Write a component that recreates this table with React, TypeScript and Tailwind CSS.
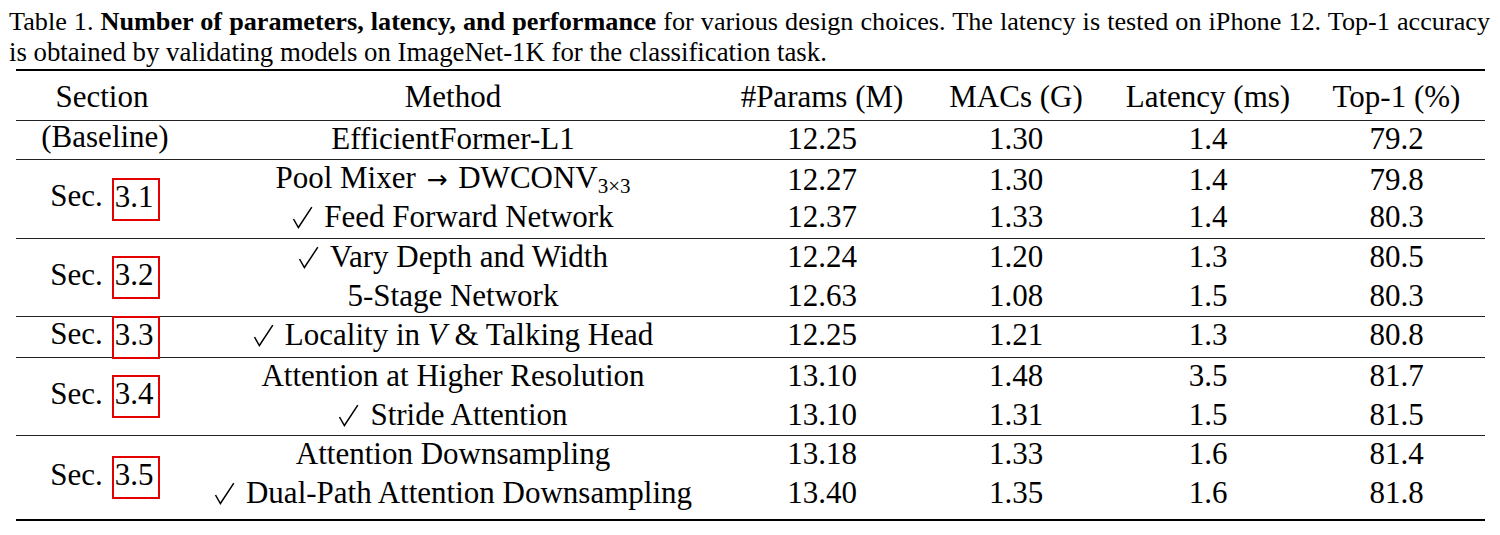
import React from "react"

const Check = () => (
    <svg width="21" height="23" viewBox="0 0 21 23" className="mr-[11px] inline-block align-[-2px]">
        <path d="M1.5 13 L6.4 21.5 L19.8 1.2" fill="none" stroke="black" strokeWidth="1.5" />
    </svg>
)

const Ref = ({ n }: { n: string }) => (
    <span className="box-border inline-block h-[43px] w-[48px] border-2 border-[#e50000] pl-[1px] text-left leading-[33px]">{n}</span>
)

type Group = {
    label: React.ReactNode
    height: string
    rows: React.ReactNode[][]
}

const groups: Group[] = [
    {
        label: <span className="pb-[6px]">(Baseline)</span>,
        height: "h-[39px]",
        rows: [["EfficientFormer-L1", "12.25", "1.30", "1.4", "79.2"]],
    },
    {
        label: "3.1",
        height: "h-[79px]",
        rows: [
            [
                <>
                    Pool Mixer <span className="mx-[3px] font-['DejaVu_Sans',sans-serif] text-[25px]">→</span> DWCONV
                    <span className="relative top-[5px] text-[21px]">3×3</span>
                </>,
                "12.27",
                "1.30",
                "1.4",
                "79.8",
            ],
            [
                <>
                    <Check />
                    Feed Forward Network
                </>,
                "12.37",
                "1.33",
                "1.4",
                "80.3",
            ],
        ],
    },
    {
        label: "3.2",
        height: "h-[78px]",
        rows: [
            [
                <>
                    <Check />
                    Vary Depth and Width
                </>,
                "12.24",
                "1.20",
                "1.3",
                "80.5",
            ],
            ["5-Stage Network", "12.63", "1.08", "1.5", "80.3"],
        ],
    },
    {
        label: "3.3",
        height: "h-[41px]",
        rows: [
            [
                <>
                    <Check />
                    Locality in <i>V</i> &amp; Talking Head
                </>,
                "12.25",
                "1.21",
                "1.3",
                "80.8",
            ],
        ],
    },
    {
        label: "3.4",
        height: "h-[78px]",
        rows: [
            ["Attention at Higher Resolution", "13.10", "1.48", "3.5", "81.7"],
            [
                <>
                    <Check />
                    Stride Attention
                </>,
                "13.10",
                "1.31",
                "1.5",
                "81.5",
            ],
        ],
    },
    {
        label: "3.5",
        height: "h-[84px]",
        rows: [
            ["Attention Downsampling", "13.18", "1.33", "1.6", "81.4"],
            [
                <>
                    <Check />
                    Dual-Path Attention Downsampling
                </>,
                "13.40",
                "1.35",
                "1.6",
                "81.8",
            ],
        ],
    },
]

const cols = "grid grid-cols-[534px_204px_184px_200px_177px] text-center"

export default function App() {
    return (
        <div className="h-[535px] w-[1500px] overflow-hidden bg-white font-['Liberation_Serif','Times_New_Roman',serif] text-black">
            <div className="pl-[9px] pr-[10px] pt-[7px] leading-[30px]">
                <div className="whitespace-nowrap text-justify text-[26.2px] [text-align-last:justify]">
                    Table 1. <b>Number of parameters, latency, and performance</b> for various design choices. The latency is tested on iPhone 12. Top-1 accuracy
                </div>
                <div className="text-[26.8px]">is obtained by validating models on ImageNet-1K for the classification task.</div>
            </div>

            <div className="ml-[16px] mt-[2px] w-[1469px] border-y-2 border-black text-[31px] leading-[36px]">
                <div className="flex h-[49px] items-center pt-[3px] text-center">
                    <div className="w-[170px] pl-[2px]">Section</div>
                    <div className={cols}>
                        <div>Method</div>
                        <div>#Params (M)</div>
                        <div>MACs (G)</div>
                        <div>Latency (ms)</div>
                        <div>Top-1 (%)</div>
                    </div>
                </div>

                {groups.map((g, gi) => (
                    <div key={gi} className={`flex border-t border-[#222] ${g.height}`}>
                        <div className="flex w-[170px] items-center justify-center pl-[8px]">
                            {gi === 0 ? (
                                g.label
                            ) : (
                                <>
                                    <span className="mr-[9px] pb-[6px]">Sec.</span>
                                    <Ref n={g.label as string} />
                                </>
                            )}
                        </div>
                        <div className="flex flex-col">
                            {g.rows.map((r, ri) => (
                                <div key={ri} className={`${cols} h-[39px] items-center pb-[11px]`}>
                                    {r.map((c, ci) => (
                                        <div key={ci} className="whitespace-nowrap">
                                            {c}
                                        </div>
                                    ))}
                                </div>
                            ))}
                        </div>
                    </div>
                ))}
            </div>
        </div>
    )
}
